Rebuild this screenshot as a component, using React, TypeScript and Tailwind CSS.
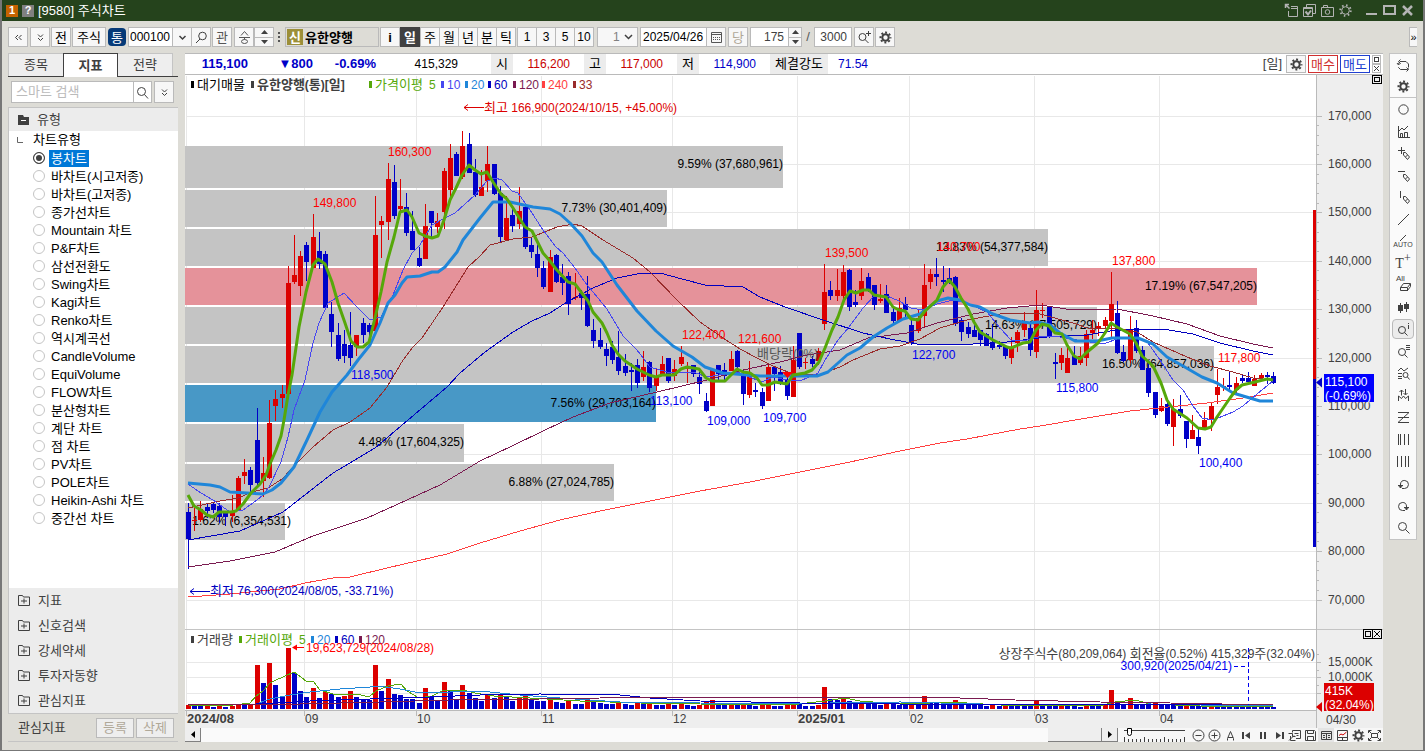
import { useState } from 'react'
import type { ReactNode } from 'react'

const UP = '#dc0000'
const DOWN = '#0000c8'
const STEP = 6.236
const X0 = 188

// [high, bodyTop, bodyBottom, low, rising]
const CANDLES: number[][] = [
  [503, 512, 539, 569, 0], [508, 520, 521, 531, 1], [501, 509, 520, 522, 1], [503, 507, 511, 518, 0], [502, 504, 510, 513, 0],
  [503, 506, 517, 523, 0], [512, 513, 517, 526, 0], [495, 512, 516, 522, 1], [476, 478, 510, 511, 1], [459, 472, 476, 484, 1],
  [467, 470, 485, 495, 0], [408, 440, 483, 486, 0], [457, 473, 481, 497, 1], [400, 423, 478, 479, 1], [390, 399, 406, 421, 1],
  [385, 394, 398, 408, 1], [266, 283, 394, 394, 1], [235, 275, 282, 284, 1], [251, 256, 286, 296, 1], [242, 245, 262, 281, 0],
  [214, 237, 268, 268, 1], [232, 251, 264, 269, 0], [251, 254, 308, 309, 0], [302, 314, 332, 347, 0], [323, 335, 359, 361, 0],
  [330, 344, 356, 363, 0], [312, 345, 358, 366, 0], [335, 335, 347, 356, 1], [318, 323, 335, 343, 0], [323, 325, 332, 339, 0],
  [196, 235, 331, 332, 1], [216, 221, 225, 258, 1], [163, 179, 222, 240, 1], [165, 182, 216, 219, 0], [179, 206, 209, 211, 1],
  [193, 207, 233, 236, 0], [211, 231, 250, 250, 0], [247, 258, 266, 267, 0], [204, 226, 259, 259, 1], [211, 211, 223, 237, 0],
  [213, 221, 227, 233, 1], [168, 171, 212, 229, 1], [144, 158, 190, 198, 1], [152, 154, 176, 176, 0], [131, 146, 177, 179, 1],
  [133, 144, 173, 173, 0], [159, 172, 195, 197, 0], [170, 187, 196, 196, 1], [146, 164, 181, 192, 1], [164, 164, 194, 195, 0],
  [186, 193, 237, 242, 0], [196, 218, 240, 241, 1], [207, 215, 226, 232, 0], [187, 211, 224, 229, 1], [204, 207, 247, 249, 0],
  [237, 245, 252, 258, 0], [245, 254, 268, 277, 0], [261, 268, 287, 289, 0], [250, 257, 292, 292, 1], [254, 255, 282, 283, 0],
  [264, 277, 283, 295, 0], [272, 276, 304, 315, 0], [273, 297, 298, 300, 1], [290, 293, 298, 310, 0], [276, 294, 326, 327, 0],
  [319, 330, 341, 348, 0], [328, 340, 347, 349, 0], [343, 349, 356, 366, 0], [341, 347, 360, 364, 0], [331, 357, 371, 375, 0],
  [354, 366, 373, 376, 0], [363, 370, 372, 391, 0], [359, 365, 383, 388, 0], [351, 367, 377, 381, 1], [361, 362, 388, 392, 0],
  [368, 376, 386, 391, 1], [356, 364, 374, 376, 1], [358, 358, 381, 383, 0], [360, 369, 376, 381, 1], [346, 357, 364, 366, 1],
  [362, 366, 369, 383, 1], [365, 365, 374, 377, 0], [372, 377, 384, 394, 0], [393, 401, 411, 412, 0], [369, 370, 406, 406, 1],
  [365, 365, 374, 380, 0], [363, 370, 376, 382, 0], [351, 359, 371, 371, 1], [350, 351, 367, 370, 0], [370, 375, 394, 405, 0],
  [361, 373, 395, 398, 1], [383, 390, 392, 397, 0], [388, 392, 406, 409, 0], [364, 367, 401, 401, 1], [367, 367, 374, 391, 0],
  [366, 372, 382, 385, 0], [377, 380, 396, 400, 0], [346, 360, 397, 397, 1], [333, 333, 367, 369, 0], [358, 362, 363, 369, 1],
  [356, 359, 364, 367, 0], [348, 351, 361, 365, 1], [264, 292, 324, 330, 1], [281, 290, 296, 300, 0], [269, 290, 296, 301, 1],
  [265, 272, 296, 301, 1], [269, 270, 307, 311, 0], [290, 302, 305, 307, 0], [268, 281, 296, 300, 1], [273, 277, 291, 292, 0],
  [285, 285, 305, 310, 0], [284, 299, 301, 303, 1], [285, 294, 313, 313, 0], [306, 312, 321, 325, 0], [298, 308, 321, 321, 1],
  [297, 304, 310, 319, 0], [320, 325, 343, 345, 0], [309, 318, 331, 333, 1], [264, 285, 316, 327, 1], [269, 274, 282, 289, 1],
  [258, 274, 277, 286, 0], [266, 280, 282, 292, 0], [268, 278, 282, 284, 0], [276, 277, 324, 326, 0], [318, 320, 332, 341, 0],
  [322, 327, 334, 338, 0], [324, 330, 337, 337, 0], [330, 330, 340, 346, 0], [333, 334, 346, 346, 0], [324, 342, 348, 350, 0],
  [341, 345, 347, 349, 0], [345, 346, 356, 359, 0], [337, 347, 358, 364, 1], [330, 332, 343, 352, 1], [312, 322, 330, 337, 1],
  [321, 328, 350, 356, 0], [290, 310, 352, 358, 1], [303, 310, 311, 318, 1], [307, 307, 337, 338, 0], [353, 362, 364, 379, 0],
  [348, 355, 363, 370, 1], [348, 358, 373, 373, 1], [346, 356, 365, 365, 0], [347, 356, 363, 365, 1], [330, 334, 358, 366, 1],
  [320, 330, 333, 339, 1], [322, 326, 329, 336, 1], [317, 320, 326, 328, 1], [272, 304, 321, 337, 1], [301, 313, 353, 354, 0],
  [345, 352, 361, 362, 0], [316, 329, 360, 363, 1], [320, 328, 351, 353, 0], [346, 350, 370, 370, 0], [360, 368, 393, 397, 0],
  [392, 392, 415, 418, 0], [398, 406, 411, 412, 1], [400, 404, 424, 426, 0], [399, 409, 427, 446, 1], [395, 409, 416, 418, 0],
  [421, 421, 439, 448, 0], [415, 430, 439, 439, 1], [429, 437, 446, 454, 0], [412, 420, 428, 428, 1], [403, 406, 420, 431, 1],
  [369, 387, 395, 404, 1], [378, 386, 387, 391, 1], [371, 385, 387, 390, 0], [377, 383, 390, 394, 1], [375, 378, 381, 383, 0],
  [372, 378, 382, 383, 0], [375, 379, 386, 386, 1], [373, 375, 378, 378, 1], [372, 375, 377, 384, 0], [372, 376, 383, 384, 0],
]

// bar heights over the volume baseline
const VOLUMES = [
  4, 3, 3, 4, 2, 4, 2, 3, 5, 4, 5, 44, 26, 46, 24, 13, 61, 36, 18, 12, 21, 11, 17, 15, 12, 13, 18, 12, 10, 9,
  44, 18, 30, 15, 14, 10, 10, 6, 21, 12, 8, 27, 18, 10, 24, 16, 11, 8, 14, 11, 14, 12, 8, 12, 13, 9, 8, 8, 11, 7,
  6, 8, 5, 5, 10, 8, 6, 5, 5, 7, 5, 4, 6, 5, 6, 4, 4, 5, 4, 7, 4, 3, 4, 7, 9, 5, 4, 6, 5, 6,
  4, 3, 4, 5, 3, 3, 4, 7, 6, 3, 3, 4, 22, 10, 9, 11, 8, 5, 7, 6, 5, 4, 5, 5, 4, 4, 6, 4, 13, 6,
  6, 5, 4, 9, 5, 4, 4, 4, 3, 4, 3, 4, 4, 4, 4, 3, 8, 4, 3, 3, 4, 3, 3, 2, 3, 3, 3, 4, 19, 6,
  5, 11, 5, 4, 4, 6, 4, 4, 4, 3, 4, 3, 3, 3, 4, 4, 3, 3, 3, 2, 2, 2, 2, 2, 2,
]

const BANDS = [
  { y: 146, h: 42, x: 783, fill: '#c4c4c4', label: '9.59% (37,680,961)' },
  { y: 190, h: 37, x: 667, fill: '#c4c4c4', label: '7.73% (30,401,409)' },
  { y: 229, h: 37, x: 1048, fill: '#c4c4c4', label: '13.83% (54,377,584)' },
  { y: 268, h: 37, x: 1257, fill: '#e5929a', label: '17.19% (67,547,205)' },
  { y: 307, h: 37, x: 1097, fill: '#c4c4c4', label: '14.63% (57,505,729)' },
  { y: 346, h: 37, x: 1214, fill: '#c4c4c4', label: '16.50% (64,857,036)' },
  { y: 385, h: 37, x: 656, fill: '#4898c6', label: '7.56% (29,703,164)' },
  { y: 424, h: 38, x: 464, fill: '#c4c4c4', label: '4.48% (17,604,325)' },
  { y: 464, h: 37, x: 614, fill: '#c4c4c4', label: '6.88% (27,024,785)' },
  { y: 503, h: 37, x: 285, fill: '#c4c4c4', label: '1.62% (6,354,531)' },
]

const LINES = [
  { color: '#ff4040', width: 1, points: '188,597 230,594 280,589 305,583 333,578 350,577 387,568 447,554 480,543 520,531 560,520 600,511 650,501 700,491 750,482 800,472 850,462 900,451 940,443 967,439 1020,429 1040,426 1087,418 1130,411 1207,403 1250,397 1273,393' },
  { color: '#7a1a50', width: 1, points: '188,567 230,561 275,552 313,536 367,518 407,500 440,485 480,461 512,446 545,430 573,417 610,403 657,392 707,380 743,370 780,362 807,355 840,350 868,338 907,333 937,323 973,314 1007,308 1040,305 1053,307 1073,310 1117,309 1153,316 1187,324 1220,336 1253,344 1273,348' },
  { color: '#0000c0', width: 1, points: '188,540 240,531 283,512 333,473 375,448 447,387 460,373 485,352 513,332 532,321 550,313 567,302 593,288 617,278 642,273 660,273 682,279 705,285 743,287 760,297 785,307 823,320 863,333 890,339 917,344 973,344 1007,342 1047,337 1087,335 1110,331 1133,329 1163,329 1193,334 1220,343 1253,351 1273,355' },
  { color: '#992b2b', width: 1, points: '188,508 220,501 238,498 252,492 268,488 282,479 297,463 313,447 333,430 350,422 370,408 387,387 403,360 413,347 422,338 443,307 468,267 480,256 490,245 513,239 532,237 557,227 573,224 582,226 603,240 633,258 650,272 677,300 700,322 723,338 740,349 757,358 773,366 793,374 818,375 840,367 853,360 880,349 900,346 920,339 940,328 967,320 1000,314 1020,313 1040,314 1073,323 1087,328 1120,329 1137,332 1153,342 1187,357 1210,366 1233,372 1253,378 1273,380' },
  { color: '#4747f0', width: 1, points: '188,484 201,493 213,500 230,512 243,510 257,500 263,495 269,487 281,462 288,437 294,410 305,380 313,343 319,323 328,303 344,293 357,307 370,320 381,317 393,295 403,270 412,253 420,245 432,225 443,219 455,213 475,195 487,181 495,178 502,180 512,191 518,193 530,210 543,230 556,247 563,253 575,268 587,285 593,292 607,309 623,336 637,350 650,367 667,372 693,372 707,377 737,372 762,382 773,377 787,380 800,381 818,373 825,360 838,340 849,327 863,308 874,296 887,296 899,301 911,308 923,310 937,304 953,300 967,303 987,312 1000,328 1011,340 1023,341 1042,336 1060,337 1083,341 1103,344 1120,338 1137,337 1148,343 1160,360 1173,380 1183,390 1193,406 1202,418 1213,420 1233,412 1243,406 1257,394 1273,381' },
  { color: '#1f86d9', width: 3, points: '188,483 210,485 220,487 230,492 247,493 263,494 272,490 281,483 294,467 307,440 320,412 332,392 347,375 358,360 370,345 380,323 388,303 395,295 402,283 407,277 420,276 432,272 438,272 445,267 457,252 463,240 480,218 493,202 510,202 533,207 550,209 560,214 570,223 582,236 593,253 602,262 617,285 637,311 656,331 673,346 692,357 705,367 723,373 760,376 817,376 828,372 847,355 860,348 873,337 887,328 903,319 920,314 937,301 948,298 960,300 970,305 980,307 993,314 1010,320 1030,323 1038,322 1050,325 1060,333 1075,341 1097,341 1112,338 1138,338 1153,344 1167,357 1183,366 1202,377 1217,383 1233,393 1260,401 1273,401' },
  { color: '#56a80a', width: 3, points: '188,495 194,506 201,510 207,515 213,517 219,512 231,512 236,511 243,504 251,493 260,484 266,475 270,464 276,450 281,436 284,420 288,395 292,375 299,327 306,292 313,265 318,259 325,264 332,282 338,303 345,323 351,341 357,347 363,347 369,342 375,318 381,292 387,262 394,237 400,212 407,210 412,217 419,233 425,236 432,238 438,236 444,220 450,200 456,188 462,175 469,165 475,170 481,174 487,172 493,182 501,194 507,199 513,208 525,227 532,231 537,241 543,253 550,261 556,269 568,282 575,284 581,292 588,301 593,312 602,323 607,333 612,345 618,354 625,361 637,369 649,375 656,377 662,375 674,375 681,369 687,367 699,369 706,378 712,381 725,381 737,369 743,372 750,373 757,378 762,385 768,385 775,382 787,384 793,375 805,373 812,370 819,362 825,348 832,330 838,317 844,300 850,291 856,293 863,290 869,290 874,295 886,297 893,307 899,310 905,311 911,319 918,320 925,311 937,300 943,287 949,280 955,287 961,298 968,309 974,322 980,332 993,340 1007,347 1011,348 1023,343 1030,342 1036,330 1042,324 1049,326 1055,333 1062,334 1067,345 1074,356 1080,359 1086,353 1098,343 1105,333 1111,323 1117,327 1130,334 1136,343 1142,356 1153,366 1161,383 1167,400 1173,409 1187,418 1198,428 1205,429 1211,427 1217,417 1230,398 1236,390 1242,385 1255,382 1267,379 1273,380' },
]

const VOLUME_LINES = [
  { color: '#56a80a', points: '188,705 225,706 250,703 256,696 263,691 270,683 276,680 283,677 294,672 301,677 307,682 313,681 320,690 333,694 345,695 357,694 369,697 376,691 388,686 401,684 407,691 419,698 432,696 444,690 463,690 475,693 494,696 530,698 580,701 640,703 700,704 790,705 825,701 845,698 860,701 900,704 930,703 950,702 1000,705 1100,706 1115,702 1135,700 1150,704 1200,706 1273,707' },
  { color: '#1f86d9', points: '188,705 256,704 270,699 290,695 310,692 340,689 370,687 376,686 385,687 400,689 420,693 450,692 480,691 520,695 560,698 620,702 700,703 790,704 830,703 900,702 980,704 1050,705 1150,704 1200,705 1273,706' },
  { color: '#0000c0', points: '188,704 256,704 310,701 370,699 430,697 480,695 540,694 620,695 650,698 700,701 800,703 900,704 1040,704 1248,704 1273,705' },
  { color: '#7a1a50', points: '188,705 300,704 380,702 450,700 540,699 600,698 700,697 800,697 900,697 960,698 1015,700 1100,702 1170,703 1273,705' },
]

const PEAKS: [number, number, string][] = [
  [388, 152, '160,300'], [313, 203, '149,800'], [682, 335, '122,400'], [738, 339, '121,600'],
  [825, 253, '139,500'], [937, 247, '140,700'], [1112, 261, '137,800'], [1218, 358, '117,800'],
]
const LOWS: [number, number, string][] = [
  [351, 375, '118,500'], [650, 401, '113,100'], [707, 421, '109,000'], [763, 418, '109,700'],
  [912, 355, '122,700'], [1056, 388, '115,800'], [1199, 463, '100,400'],
]

const LEGEND: [number, string, string][] = [
  [191, '대기매물', '#000000'], [251, '유한양행(통)[일]', '#404040'], [369, '가격이평', '#56a80a'], [441, '10', '#4747f0'],
  [465, '20', '#1f86d9'], [488, '60', '#0000c0'], [513, '120', '#7a1a50'], [542, '240', '#ff4040'], [573, '33', '#992b2b'],
]
const VOLUME_LEGEND: [number, string, string][] = [
  [191, '거래량', '#404040'], [239, '거래이평', '#56a80a'], [311, '20', '#1f86d9'], [335, '60', '#0000c0'], [359, '120', '#7a1a50'],
]

const MONTHS: [number, string][] = [
  [186, '2024/08'], [304, '09'], [416, '10'], [541, '11'], [672, '12'], [797, '2025/01'], [909, '02'], [1034, '03'], [1159, '04'],
]

const CHART_TYPES = [
  '봉차트', '바차트(시고저종)', '바차트(고저종)', '종가선차트', 'Mountain 차트', 'P&F차트', '삼선전환도', 'Swing차트', 'Kagi차트', 'Renko차트',
  '역시계곡선', 'CandleVolume', 'EquiVolume', 'FLOW차트', '분산형차트', '계단 차트', '점 차트', 'PV차트', 'POLE차트', 'Heikin-Ashi 차트', '중간선 차트',
]

const PRICES = [170, 160, 150, 140, 130, 120, 110, 100, 90, 80, 70]
const priceY = (k: number) => Math.round(115.5 + (170 - k) * 4.84)

function Ico({ children }: { children: ReactNode }) {
  return (
    <svg width="15" height="15" viewBox="0 0 15 15" fill="none" stroke="currentColor" strokeWidth="1" className="shrink-0" aria-hidden="true">
      {children}
    </svg>
  )
}

const gearShape = (
  <>
    <circle cx="7.5" cy="7.5" r="3.2" strokeWidth="2" />
    <circle cx="7.5" cy="7.5" r="5" strokeWidth="2" strokeDasharray="1.96 1.96" strokeDashoffset="1" />
  </>
)
const pencil = <path d="M7.500 6.500h2l4 4.500-2 2.500-4-4.500zM9.500 11l2-2" />
const doubleDown = <path d="M5 4.500L7.500 7 10 4.500M5 8l2.500 2.500L10 8" />

function TBtn({ children, label, className = 'text-black' }: { children: ReactNode; label?: string; className?: string }) {
  return (
    <button aria-label={label} className={`flex h-5 shrink-0 items-center justify-center border border-[#bababa] bg-[#f7f7f7] leading-none ${className}`}>
      {children}
    </button>
  )
}

function Spinner({ className }: { className: string }) {
  return (
    <div className={`flex h-5 shrink-0 flex-col border border-[#bababa] bg-[#f7f7f7] ${className}`}>
      <button aria-label="위" className="flex flex-1 items-center justify-center border-b border-[#bababa]">
        <svg width="7" height="4" viewBox="0 0 7 4"><path d="M0 4L3.500 0 7 4z" fill="#404040" /></svg>
      </button>
      <button aria-label="아래" className="flex flex-1 items-center justify-center">
        <svg width="7" height="4" viewBox="0 0 7 4"><path d="M0 0L3.500 4 7 0z" fill="#404040" /></svg>
      </button>
    </div>
  )
}

function TitleBar() {
  return (
    <header className="flex h-[21px] shrink-0 items-center bg-[#25431c] pl-1 pr-2 text-[#b4b4b4]">
      <span className="flex h-3 w-3 items-center justify-center bg-[#c46200] text-[11px] font-bold text-white">1</span>
      <span className="ml-1 flex h-3 w-3 items-center justify-center bg-[#808080] text-[11px] font-bold text-white">?</span>
      <h1 className="ml-1 text-[13px] leading-none text-white">[9580] 주식차트</h1>
      <div className="ml-auto flex items-center gap-[3px]">
        <button aria-label="분리"><Ico><path d="M1.500 5V1.500H5M1.500 1.500l4 4" strokeWidth="1.500" /><path d="M4.500 8v5.500h9v-10H7M7 5.500h6.500" /></Ico></button>
        <button aria-label="복사"><Ico><path d="M1.500 4.500h9v9h-9zM1.500 5.500h9M4.500 4V1.500h9v9H11" /><path d="M3.500 8.500l2.500 3 3-4" strokeWidth="2" /></Ico></button>
        <button aria-label="캡처"><Ico><path d="M1.500 4.500h12v9h-12zM3.500 4V2.500h4V4" /><circle cx="7.500" cy="9" r="2.300" /></Ico></button>
        <button aria-label="설정"><Ico><circle cx="7.500" cy="7.500" r="3.800" /><circle cx="7.500" cy="7.500" r="5.200" strokeWidth="2" strokeDasharray="1.500 2.580" /></Ico></button>
        <button aria-label="최소화" className="ml-2"><Ico><path d="M2 11h11" strokeWidth="2" /></Ico></button>
        <button aria-label="최대화"><Ico><path d="M2 3h11v8H2z" strokeWidth="2" /></Ico></button>
        <button aria-label="닫기"><Ico><path d="M3 3l9 9M12 3l-9 9" strokeWidth="2.500" /></Ico></button>
      </div>
    </header>
  )
}

function Toolbar() {
  return (
    <div className="flex h-8 shrink-0 items-center pl-1.5 pr-1.5 text-[13px] text-black">
      <TBtn label="이전" className="w-5 text-[#404040]"><Ico><path d="M7 5L4.500 7.500 7 10M10.500 5L8 7.500l2.500 2.500" /></Ico></TBtn>
      <TBtn label="펼치기" className="ml-0.5 w-5 text-[#404040]"><Ico>{doubleDown}</Ico></TBtn>
      <TBtn className="ml-px w-5">전</TBtn>
      <TBtn className="ml-px w-[34px]">주식</TBtn>
      <button className="ml-0.5 h-[18px] w-[18px] shrink-0 rounded bg-[#063a78] leading-none text-white">통</button>
      <input aria-label="종목코드" defaultValue="000100" className="ml-0.5 h-5 w-[45px] shrink-0 border border-[#bababa] bg-white px-px text-[12px]" />
      <TBtn label="목록" className="-ml-px w-5 text-[#404040]"><Ico><path d="M4.500 6l3 3 3-3" strokeWidth="1.500" /></Ico></TBtn>
      <TBtn label="종목찾기" className="-ml-px w-5 text-[#404040]"><Ico><circle cx="8.500" cy="6" r="3.800" /><path d="M6 9l-4 4" /></Ico></TBtn>
      <TBtn className="ml-px w-5 text-[#555555]">관</TBtn>
      <TBtn label="승격" className="ml-0.5 w-5 text-[#555555]"><Ico><path d="M7.500 1.500L4 5.500M7.500 1.500L11 5.500M2 7.500h11M7.500 7.500v2" /><ellipse cx="7.500" cy="11.500" rx="3" ry="2" /></Ico></TBtn>
      <Spinner className="w-5" />
      <span className="mx-px flex h-5 w-2 shrink-0 flex-col items-center justify-around py-1"><i className="size-0.5 bg-[#555555]" /><i className="size-0.5 bg-[#555555]" /><i className="size-0.5 bg-[#555555]" /></span>
      <button className="ml-px flex h-5 w-[94px] shrink-0 items-center gap-0.5 border border-[#bababa] bg-[#dddcd6] pl-px font-bold leading-none">
        <span className="flex h-4 w-4 items-center justify-center bg-[#9c8f38] text-white">신</span>유한양행
      </button>
      <TBtn className="ml-px w-5 font-bold">i</TBtn>
      <button className="h-5 w-5 shrink-0 bg-[#404040] font-bold leading-none text-white">일</button>
      {['주', '월', '년', '분', '틱'].map(t => <TBtn key={t} className="-mr-px w-5">{t}</TBtn>)}
      <span className="w-0.5" />
      {['1', '3', '5', '10'].map(t => <TBtn key={t} className="-mr-px w-5 text-[12px]">{t}</TBtn>)}
      <div className="relative ml-1 h-5 w-[41px] shrink-0 border border-[#bababa] bg-[#f7f7f7]">
        <select aria-label="주기" className="block h-full w-full appearance-none pl-[15px] text-[12px] leading-[18px] text-[#808080]"><option>1</option></select>
        <svg className="pointer-events-none absolute right-1 top-1.5" width="9" height="6" viewBox="0 0 9 6" fill="none" stroke="#404040" strokeWidth="1.500"><path d="M1 1l3.500 3.500L8 1" /></svg>
      </div>
      <input aria-label="일자" defaultValue="2025/04/26" className="ml-0.5 h-5 w-[67px] shrink-0 border border-[#bababa] bg-white px-0.5 text-[12px]" />
      <TBtn label="달력" className="-ml-px w-5 text-[#555555]"><Ico><path d="M2.500 2.500h10v10h-10zM2.500 4.500h10" /><path d="M4 7.500h7M4 9.500h7" strokeDasharray="1 1" /></Ico></TBtn>
      <TBtn className="ml-0.5 w-5 text-[#b0a898]">당</TBtn>
      <input aria-label="봉 개수" defaultValue="175" className="ml-0.5 h-5 w-[39px] shrink-0 border border-[#bababa] bg-white px-1 text-right text-[12px] text-[#404040]" />
      <Spinner className="-ml-px w-3.5" />
      <span className="w-3 shrink-0 text-center text-[#555555]">/</span>
      <input aria-label="전체 봉" defaultValue="3000" className="h-5 w-[38px] shrink-0 border border-[#bababa] bg-white px-1 text-right text-[12px] text-[#404040]" />
      <TBtn label="확대" className="ml-0.5 w-5 text-[#404040]"><Ico><circle cx="5.500" cy="7" r="3.500" /><path d="M8 9.500l3.500 3.500M9 3.500h5M11.500 1v5" /></Ico></TBtn>
      <TBtn label="차트설정" className="ml-px w-5 text-[#404040]"><Ico>{gearShape}</Ico></TBtn>
      <button aria-label="더보기" className="ml-auto h-5 w-2 border border-r-0 border-[#bababa] bg-[#f7f7f7] text-[11px] leading-none">»</button>
    </div>
  )
}

function Sidebar() {
  const [type, setType] = useState('봉차트')
  return (
    <aside className="flex w-[170px] shrink-0 flex-col text-[13px] text-[#404040]">
      <div role="tablist" className="flex h-6 shrink-0 border-b border-[#404040]">
        <button role="tab" aria-selected={false} className="w-[55px] border-l border-t border-[#c4c4c4] bg-[#eeeeee]">종목</button>
        <button role="tab" aria-selected className="-mb-px w-[55px] border border-b-0 border-[#404040] bg-white font-bold">지표</button>
        <button role="tab" aria-selected={false} className="w-[55px] border-r border-t border-[#c4c4c4] bg-[#eeeeee]">전략</button>
      </div>
      <div className="my-1 flex h-[22px] shrink-0 gap-0.5 pl-[3px] pr-1">
        <div className="flex flex-1 border border-[#bababa] bg-white">
          <input aria-label="스마트 검색" placeholder="스마트 검색" className="w-[121px] px-1 placeholder:text-[#bbbbbb]" />
          <button aria-label="검색" className="flex flex-1 items-center justify-center border-l border-[#bababa]"><Ico><circle cx="6.500" cy="6.500" r="4" /><path d="M9.500 9.500l3.500 4" /></Ico></button>
        </div>
        <button aria-label="펼치기" className="flex w-5 items-center justify-center border border-[#bababa] bg-[#f7f7f7]"><Ico>{doubleDown}</Ico></button>
      </div>
      <button className="flex h-6 shrink-0 items-center border-l border-t border-[#c4c4c4] bg-[#ececec] pl-[9px]">
        <svg width="11" height="10" viewBox="0 0 11 10"><path d="M0 0h5l1 2h5v8H0z" fill="#404040" /><path d="M3 5.500h5" stroke="#fff" /></svg>
        <span className="ml-2">유형</span>
      </button>
      <div className="flex-1 border-l border-[#c4c4c4] bg-white text-black">
        <div className="flex h-[18px] items-center pl-2">
          <svg width="6" height="6" viewBox="0 0 6 6" fill="none" stroke="#666"><path d="M.5 0v5.500H6" /></svg>
          <span className="ml-2.5">차트유형</span>
        </div>
        {CHART_TYPES.map(t => (
          <label key={t} className="flex h-[18px] items-center pl-6 leading-none">
            <input
              type="radio" name="chartType" checked={type === t} onChange={() => setType(t)}
              className="size-3 appearance-none rounded-full border border-[#c4c4c4] bg-white checked:border-[#404040] checked:bg-[#404040] checked:shadow-[inset_0_0_0_2px_white]"
            />
            <span className={type === t ? 'ml-1 bg-[#0078d7] px-0.5 py-0.5 text-white' : 'ml-1 px-0.5'}>{t}</span>
          </label>
        ))}
      </div>
      <div className="shrink-0 border-l border-[#c4c4c4] bg-[#ececec]">
        {['지표', '신호검색', '강세약세', '투자자동향', '관심지표'].map(t => (
          <button key={t} className="flex h-[25px] w-full items-center pl-[9px]">
            <svg width="12" height="11" viewBox="0 0 12 11" fill="none" stroke="#404040"><path d="M.5.5h4l1 1.500h6v8.500H.5zM3 6h6M6 3.500v5" /></svg>
            <span className="ml-2">{t}</span>
          </button>
        ))}
      </div>
      <div className="flex h-[29px] shrink-0 items-center gap-0.5 border-b border-t border-[#c4c4c4] pl-2.5 pr-1">
        <span className="flex-1">관심지표</span>
        <button className="h-5 w-[38px] border border-[#bababa] bg-[#eeeeee] leading-none text-[#b0a898]">등록</button>
        <button className="h-5 w-[38px] border border-[#bababa] bg-[#eeeeee] leading-none text-[#b0a898]">삭제</button>
      </div>
    </aside>
  )
}

function QuoteBar() {
  return (
    <div className="flex h-[22px] shrink-0 items-center border-b border-t border-[#bababa] bg-white text-[12px] text-black">
      <span className="w-[63px] text-right text-[13px] font-bold text-[#0000c8]">115,100</span>
      <span className="w-[65px] text-right text-[13px] font-bold text-[#0000c8]">▼800</span>
      <span className="w-[63px] text-right text-[13px] font-bold text-[#0000c8]">-0.69%</span>
      <span className="w-[82px] text-right">415,329</span>
      <span className="ml-[33px] w-[22px] self-stretch bg-[#ececec] text-center text-[13px]">시</span>
      <span className="w-[57px] text-right text-[#c80000]">116,200</span>
      <span className="ml-3.5 w-[22px] self-stretch bg-[#ececec] text-center text-[13px]">고</span>
      <span className="w-[57px] text-right text-[#c80000]">117,000</span>
      <span className="ml-3.5 w-[22px] self-stretch bg-[#ececec] text-center text-[13px]">저</span>
      <span className="w-[57px] text-right text-[#0000c8]">114,900</span>
      <span className="ml-3.5 w-[58px] self-stretch bg-[#ececec] text-center text-[13px]">체결강도</span>
      <span className="w-10 text-right text-[#0000c8]">71.54</span>
      <span className="ml-auto mr-1 text-[13px] text-[#404040]">[일]</span>
      <button aria-label="설정" className="flex h-[18px] w-5 items-center justify-center border border-[#bababa] bg-[#f7f7f7] text-[#404040]"><Ico>{gearShape}</Ico></button>
      <button className="ml-0.5 h-[18px] w-[30px] border border-[#d03030] text-[13px] leading-none text-[#d03030]">매수</button>
      <button className="ml-0.5 h-[18px] w-[30px] border border-[#2040d0] text-[13px] leading-none text-[#2040d0]">매도</button>
      <div className="mx-0.5 flex flex-col">
        <button aria-label="확대" className="size-[9px] border border-[#bababa] p-px"><i className="block size-full border border-[#404040]" /></button>
        <button aria-label="닫기" className="size-[9px] border border-[#bababa]"><svg viewBox="0 0 7 7" stroke="#404040" className="size-full"><path d="M1 1l5 5M6 1L1 6" /></svg></button>
      </div>
    </div>
  )
}

// Hangul runs are set one size larger than the figures around them
function Mixed({ text }: { text: string }) {
  return text.split(/([가-힣]+)/).map((part, i) => (i % 2 ? <tspan key={i} fontSize="13">{part}</tspan> : part))
}

function Legend({ items, y, period }: { items: [number, string, string][]; y: number; period: number }) {
  return (
    <g>
      {items.map(([x, t, c]) => (
        <g key={x} fill={c}>
          <rect x={x} y={y - 3} width="3" height="7" />
          <text x={x + 6} y={y + 5} fontWeight={t.startsWith('유한') ? 700 : 400}><Mixed text={t} /></text>
        </g>
      ))}
      <text x={period} y={y + 5} fill="#56a80a">5</text>
    </g>
  )
}

function Chart() {
  return (
    <svg viewBox="185 75 1198 653" className="block h-auto w-full bg-white text-[12px]" role="img" aria-label="유한양행 일봉 차트">
      <rect x="1316" y="75" width="67" height="653" fill="#eeeeee" />
      <rect x="185" y="711" width="1198" height="17" fill="#eeeeee" />
      <g stroke="#e8e8e8" shapeRendering="crispEdges">
        {MONTHS.map(([x]) => <path key={x} d={`M${x + 0.5} 76V710`} />)}
        {PRICES.map(k => <path key={k} d={`M186 ${priceY(k) + 0.5}H1316`} />)}
        <path d="M186 662.500H1316M186 677.500H1316M186 693.500H1316" />
      </g>

      {/* 매물대 */}
      <g shapeRendering="crispEdges">
        {BANDS.map(b => <rect key={b.y} x="185" y={b.y} width={b.x - 185} height={b.h} fill={b.fill} />)}
      </g>
      <g textAnchor="end" fill="#000">
        {BANDS.map(b => <text key={b.y} x={Math.max(b.x, 291)} y={b.y + 22}>{b.label}</text>)}
      </g>

      {/* 봉 */}
      <g shapeRendering="crispEdges">
        {CANDLES.map(([hi, top, bot, lo, up], i) => {
          const x = Math.round(X0 + i * STEP)
          return (
            <g key={i} fill={up ? UP : DOWN}>
              <rect x={x} y={hi} width="1" height={Math.max(lo - hi, 1)} />
              <rect x={x - 2} y={top} width="5" height={Math.max(bot - top, 1)} />
            </g>
          )
        })}
      </g>
      {LINES.map(l => (
        <polyline key={l.color} points={l.points} fill="none" stroke={l.color} strokeWidth={l.width} strokeLinejoin="round" shapeRendering={l.width === 1 ? 'crispEdges' : 'auto'} />
      ))}

      <g fill="#ff0000">{PEAKS.map(([x, y, t]) => <text key={t} x={x} y={y + 4}>{t}</text>)}</g>
      <g fill="#0000f0">{LOWS.map(([x, y, t]) => <text key={t} x={x} y={y + 4}>{t}</text>)}</g>
      <text x="757" y="358" fill="#555"><Mixed text="배당락(0%)" /></text>
      <path d="M782 372h11l-5.500 6z" fill="#ff0000" />
      <text x="484" y="112" fill="#dc0000"><Mixed text="최고 166,900(2024/10/15, +45.00%)" /></text>
      <path d="M468 104.500l-4 3 4 3M464 107.500h20" fill="none" stroke="#dc0000" />
      <text x="210" y="595" fill="#0000c0"><Mixed text="최저 76,300(2024/08/05, -33.71%)" /></text>
      <path d="M194 588.500l-4 3 4 3M190 591.500h20" fill="none" stroke="#0000c0" />

      {/* 거래량 */}
      <path d="M185 629.500H1383" stroke="#c4c4c4" />
      <g shapeRendering="crispEdges">
        {VOLUMES.map((v, i) => (
          <rect key={i} x={Math.round(X0 + i * STEP) - 2} y={709 - v} width="5" height={v} fill={i === 0 || v > VOLUMES[i - 1] ? UP : DOWN} />
        ))}
      </g>
      {VOLUME_LINES.map(l => <polyline key={l.color} points={l.points} fill="none" stroke={l.color} shapeRendering="crispEdges" />)}
      <Legend items={LEGEND} y={84} period={429} />
      <Legend items={VOLUME_LEGEND} y={639} period={299} />
      <text x="306" y="652" fill="#ff0000">19,623,729(2024/08/28)</text>
      <path d="M293 647.500h11" stroke="#ff0000" />
      <path d="M292 647.500l5-3v6z" fill="#ff0000" />
      <text x="1315" y="658" textAnchor="end" fill="#404040"><Mixed text="상장주식수(80,209,064) 회전율(0.52%) 415,329주(32.04%)" /></text>
      <text x="1232" y="670" textAnchor="end" fill="#0000f0">300,920(2025/04/21)</text>
      <path d="M1234 666.500h15M1248.500 648V705" stroke="#0000f0" strokeDasharray="4 3" />

      {/* 축 */}
      <g stroke="#bababa" shapeRendering="crispEdges">
        <path d="M1316.500 75V728M185 710.500H1316" />
        {[...Array(51)].map((_, i) => <path key={i} d={`M1317 ${Math.round(115.5 + i * 9.68) + 0.5}h${i % 5 ? 2 : 5}`} />)}
        <path d="M1317 654.500h2M1317 662.500h4M1317 670.500h2M1317 677.500h4M1317 685.500h2M1317 693.500h4" />
        {MONTHS.map(([x]) => <path key={x} d={`M${x + 0.5} 711v5`} />)}
      </g>
      <g fill="#404040">
        {PRICES.map(k => <text key={k} x="1328" y={priceY(k) + 4}>{k},000</text>)}
        <text x="1328" y="666">15,000K</text>
        <text x="1328" y="681">10,000K</text>
        {MONTHS.map(([x, t]) => <text key={x} x={x + 1} y="723" fontSize={t.length > 2 ? 13 : 12} fontWeight={t.length > 2 ? 700 : 400}>{t}</text>)}
        <text x="1326" y="724">04/30</text>
      </g>
      <g shapeRendering="crispEdges">
        <rect x="1313" y="210" width="3" height="169" fill="#dc0000" />
        <rect x="1313" y="379" width="3" height="168" fill="#0000c8" />
        <rect x="1324" y="374" width="50" height="28" fill="#0000ff" />
        <rect x="1324" y="683" width="50" height="28" fill="#dc0000" />
      </g>
      <path d="M1316 382.500l6-5v10z" fill="#0000c8" />
      <path d="M1316 707l6-5v10z" fill="#dc0000" />
      <g fill="#fff">
        <text x="1325" y="386">115,100</text>
        <text x="1325" y="400">(-0.69%)</text>
        <text x="1325" y="695">415K</text>
        <text x="1325" y="709">(32.04%)</text>
      </g>
      <g fill="none" stroke="#000" shapeRendering="crispEdges">
        <path d="M1372.500 75.500h9v8h-9zM1374.500 77.500h5v4h-5z" />
        <path d="M1363.500 629.500h9v9h-9zM1365.500 631.500h5v5h-5zM1372.500 629.500h9v9h-9zM1374 631l6 6M1380 631l-6 6" />
      </g>
    </svg>
  )
}

function ScrollRow() {
  const icons: [string, ReactNode][] = [
    ['축소', <><circle cx="7.5" cy="7.5" r="5.5" /><path d="M4.500 7.500h6" /></>],
    ['확대', <><circle cx="7.5" cy="7.5" r="5.5" /><path d="M4.500 7.500h6M7.500 4.500v6" /></>],
    ['자동', <path d="M4.500 12.500v-2L7.500 3.500l3 7v2M5 9.500h5" />],
    ['처음', <><path d="M4 4v7" strokeWidth="2" /><path d="M11 4v7L6 7.500z" fill="currentColor" stroke="none" /></>],
    ['정지', <path d="M6 4v7M10 4v7" strokeWidth="2" />],
    ['끝', <><path d="M12 4v7" strokeWidth="2" /><path d="M5 4v7l5-3.500z" fill="currentColor" stroke="none" /></>],
    ['불러오기', <path d="M5.500 4.500v-2h8v8H9M7.500 5.500h4M9.500 7.500h2M1.500 5.500h4v3h3M2 12.500l5-5M3.500 8v4.500h5" />],
    ['저장', <path d="M2.500 2.500h9l1 1v9h-10zM4.500 2.500v3h6v-3M4.500 12.500v-4h6v4" />],
    ['표', <path d="M2.500 3.500h10v8h-10zM2.500 5.500h10M7.500 6v5M4 7.500h2M4 9.500h2M9 7.500h2M9 9.500h2" />],
    ['차트', <><path d="M2.500 2.500h10v10h-10zM3 9.500h9M7.500 10v2.500" /><path d="M4 7.500l2-1.500 2 1 3.500-3" stroke="#d00000" /></>],
    ['설정', gearShape],
    ['전체화면', <path d="M4.500 5.500h6v4h-6zM1.500 5V2.500h3M10.500 2.500h3V5M13.500 10v2.500h-3M4.500 12.500h-3V10M2 3l2.500 2.500M13 3L10.500 5.500M13 12L10.500 9.500M2 12L4.500 9.500" />],
  ]
  const arrow = 'flex h-3.5 w-4 shrink-0 items-center justify-center border-b border-r border-[#808080] bg-[#eeeeee]'
  return (
    <div className="flex h-3.5 shrink-0 items-center bg-[#f7f7f7] text-[#404040]">
      <button aria-label="왼쪽" className={arrow}><svg width="4" height="7" viewBox="0 0 4 7"><path d="M4 0v7L0 3.500z" /></svg></button>
      <div className="flex h-full flex-1 justify-end bg-[#fafafa]"><div className="h-full w-[54px] border-b border-r border-[#808080] bg-[#eeeeee]" /></div>
      <button aria-label="오른쪽" className={arrow}><svg width="4" height="7" viewBox="0 0 4 7"><path d="M0 0v7l4-3.500z" /></svg></button>
      <div className="relative ml-1.5 h-3.5 w-[62px] shrink-0">
        <svg className="absolute inset-0" width="62" height="14" viewBox="0 0 62 14" stroke="#404040" shapeRendering="crispEdges">
          <path d="M0 2.500h61" />
          {[...Array(16)].map((_, i) => <path key={i} d={`M${i * 4 + 0.5} ${i % 5 ? 11 : 9}V14`} />)}
        </svg>
        <input
          type="range" aria-label="배율" defaultValue="6"
          className="absolute inset-0 h-2 w-full appearance-none bg-transparent [&::-webkit-slider-thumb]:h-2 [&::-webkit-slider-thumb]:w-[5px] [&::-webkit-slider-thumb]:appearance-none [&::-webkit-slider-thumb]:rounded-b-sm [&::-webkit-slider-thumb]:border [&::-webkit-slider-thumb]:border-black [&::-webkit-slider-thumb]:bg-white"
        />
      </div>
      <div className="ml-1 flex pr-px">
        {icons.map(([label, d]) => (
          <button key={label} aria-label={label} className={`flex h-3.5 w-4 items-center justify-center ${label === '표' ? 'bg-[#e4e4e4]' : ''}`}>
            <Ico>{d}</Ico>
          </button>
        ))}
      </div>
    </div>
  )
}

function DrawTools() {
  const tools: [string, ReactNode][] = [
    ['새로고침', <path d="M2.500 6.500v-1l1.500-2h6l2.500 2.500v3M1 5l1.500 2 2-2M12.500 9.500l-1 2h-7L2.500 9.500V9M4.500 1.500l-2 2 2 2M10.500 9.500l2 2-2 2" />],
    ['설정', gearShape],
    ['원', <circle cx="7.5" cy="7.5" r="4.7" />],
    ['지표', <path d="M2.500 2v11.500H14M4.500 13V9.500h2V13M8.500 13V8.500h3V13M3 7l3-3 2 2 4-4" />],
    ['십자선', <><path d="M2 4.500h7M5.500 1v7" />{pencil}</>],
    ['수평선', <><path d="M2 3.500h7" />{pencil}</>],
    ['수직선', <><path d="M4.500 1v7" />{pencil}</>],
    ['추세선', <path d="M2 13L13 2" />],
  ]
  const more: [string, ReactNode][] = [
    ['봉모양', <><path d="M4.500 3v10M10.500 2v10" /><path d="M2 5h5v6H2zM8 4h5v5H8z" fill="currentColor" stroke="none" /></>],
    ['정보', <><circle cx="6" cy="8" r="3.5" /><path d="M8.500 10.500l3 3M12.500 1v1M12.500 3v4" /></>],
    ['목록', <><circle cx="6" cy="8" r="3.5" /><path d="M8.500 10.500l3 3M10 1.500h4M10 3.500h4M10 5.500h4" /></>],
    ['분석', <><path d="M2 5l3-3 3 3 4-3M2 7.500h4M2 10.500h4M2 12.500h4" /><circle cx="9.5" cy="9" r="2.5" /><path d="M11.500 11l2 2.500" /></>],
    ['신호', <path d="M2.500 13V8l3 2.500 2-2.500 2 2.500 3-2.500v5M5.500 7.500V2M3.500 4l2-2 2 2M9.500 1v5.500M7.500 5l2 2 2-2" />],
    ['지그재그', <path d="M2 2.500h11L2 12.500h11M2 7.500h11" />],
    ['시간대', <path d="M2.500 2v11M4.500 2v11M8.500 2v11M12.500 2v11" />],
    ['주기', <path d="M1.500 2v11M5.500 2v11M9.500 2v11M12.500 2v11" />],
    ['되돌리기', <path d="M6 12.500H8.500A4 4 0 1 0 4.500 8M2 9.500h5M4.500 8v4M2.500 9.500l2 2.500 2-2.500" />],
    ['다시실행', <path d="M9 12.500H6.500A4 4 0 1 1 10.500 8M8 9.500h5M10.500 8v4M8.500 9.500l2 2.500 2-2.500" />],
    ['돋보기', <><circle cx="6.500" cy="6.500" r="4" /><path d="M9.500 9.500l4 4" /></>],
  ]
  const btn = 'flex h-[22px] w-full items-center justify-center'
  return (
    <nav className="flex w-7 shrink-0 flex-col self-start border border-[#c4c4c4] bg-[#fafafa] pb-px text-[#404040]">
      {tools.map(([label, d]) => (
        <button key={label} aria-label={label} className={`${btn} ${label === '설정' ? 'border-b border-[#c4c4c4]' : ''}`}><Ico>{d}</Ico></button>
      ))}
      <button className="flex h-[22px] w-full flex-col items-center justify-center text-[7px] leading-[7px]">
        <svg width="8" height="6" viewBox="0 0 8 6" stroke="currentColor"><path d="M1 6l6-6" /></svg>AUTO
      </button>
      <button className="flex h-[22px] w-full items-end justify-center font-['Liberation_Serif',serif] text-[14px] leading-5">T<span className="self-start text-[12px] leading-3">+</span></button>
      <button className="flex h-[22px] w-full flex-col items-start pl-1.5 text-[8px] leading-[9px]">
        All<svg className="ml-1" width="12" height="9" viewBox="0 0 12 9" fill="none" stroke="currentColor"><path d="M.5 4.500l3-4h7l-3 4zM.5 4.500v3h7l3-4V1M7.500 5v3" /></svg>
      </button>
      {more.map(([label, d]) => (
        <button key={label} aria-label={label} className={label === '정보' ? 'mx-auto my-px flex h-5 w-[22px] items-center justify-center rounded border border-[#bababa] bg-[#ececec]' : btn}><Ico>{d}</Ico></button>
      ))}
    </nav>
  )
}

export default function App() {
  return (
    <div className="flex min-h-screen flex-col border-x-2 border-b border-[#777777] bg-[#dddcd6] font-['Liberation_Sans','Noto_Sans_CJK_KR',sans-serif]">
      <TitleBar />
      <Toolbar />
      <div className="flex flex-1 items-stretch pb-2 pl-1.5 pr-1.5">
        <Sidebar />
        <main className="ml-[7px] mr-1.5 min-w-0 flex-1">
          <QuoteBar />
          <Chart />
          <ScrollRow />
        </main>
        <DrawTools />
      </div>
    </div>
  )
}
